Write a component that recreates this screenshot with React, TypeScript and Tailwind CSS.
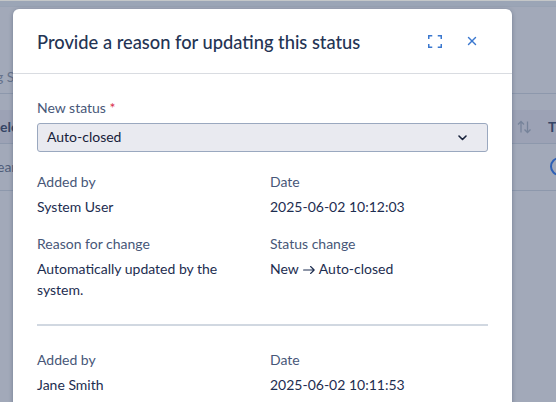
import { X } from 'lucide-react';

const history = [
  {
    author: 'System User',
    date: '2025-06-02 10:12:03',
    reason: 'Automatically updated by the system.',
    change: ['New', 'Auto-closed'],
  },
  {
    author: 'Jane Smith',
    date: '2025-06-02 10:11:53',
    reason: '',
    change: [],
  },
];

function Field({ label, children }: { label: string; children: React.ReactNode }) {
  return (
    <div>
      <dt className="text-[#475778]">{label}</dt>
      <dd className="mt-1 text-[#1d2d50]">{children}</dd>
    </div>
  );
}

function Arrow() {
  return (
    <svg
      className="mr-[3.5px] ml-[4.5px] inline-block align-[-1px]"
      width="12"
      height="10"
      viewBox="0 0 12 10"
      fill="none"
      stroke="currentColor"
      strokeWidth="1.1"
      strokeLinecap="round"
      strokeLinejoin="round"
    >
      <path d="M0.6 5h10.6M7.6 1.5L11.2 5L7.6 8.5" />
    </svg>
  );
}

// Table page behind the dialog, already dimmed
function TablePage() {
  return (
    <div className="flex h-full flex-col overflow-hidden bg-[#a2a9b9]">
      <div className="h-px shrink-0 bg-[#c4c7c8]" />
      <div className="h-1.5 shrink-0 border-b border-[#98a2b3] bg-[#9ba5b6]" />
      <div className="flex h-[87px] shrink-0 items-end border-b border-[#8d98ac] pb-1.5">
        <span className="-ml-1 text-[#66738c]">g S</span>
      </div>
      <div className="h-4 shrink-0" />
      <div className="flex h-[34px] shrink-0 items-center border-b border-[#8d98ac] bg-[#9ca2b5] font-bold text-[#354566]">
        <span className="w-[517px] shrink-0">ele</span>
        <svg
          className="shrink-0 text-[#76839a]"
          width="15"
          height="14"
          viewBox="0 0 15 14"
          fill="none"
          stroke="currentColor"
          strokeWidth="1.3"
        >
          <path d="M4 12.5V1.5M1 4.5L4 1.5L7 4.5M10.5 1.5V12.5M7.5 9.5L10.5 12.5L13.5 9.5" />
        </svg>
        <span className="ml-4">T</span>
      </div>
      <div className="flex h-[47px] shrink-0 items-center border-b border-[#8d98ac] pb-px text-[#4f5d7a]">
        <span className="-ml-[3px] w-[553px] shrink-0">ear</span>
        <span className="h-[19px] w-8 shrink-0 rounded-full border-2 border-[#2e60b5]" />
      </div>
    </div>
  );
}

export default function App() {
  return (
    <div className="relative h-[402px] w-[556px] overflow-hidden font-['Lato',sans-serif] text-sm leading-[21px]">
      <TablePage />

      <div
        role="dialog"
        className="absolute top-[9px] left-[13px] h-[410px] w-[499px] rounded-md bg-white shadow-[0_1px_4px_rgba(40,55,85,0.4)]"
      >
        <header className="flex h-[65px] items-center border-b border-[#d9dce1] pr-[33px] pl-6">
          <h2 className="flex-1 pt-0.5 text-[18.3px] font-medium text-[#243454]">
            Provide a reason for updating this status
          </h2>
          <button aria-label="Expand" className="text-[#3b78cf]">
            <svg
              width="14"
              height="13"
              viewBox="0 0 14 13"
              fill="none"
              stroke="currentColor"
              strokeWidth="1.5"
            >
              <path d="M0.75 4V0.75H4.25M9.75 0.75H13.25V4M13.25 9V12.25H9.75M4.25 12.25H0.75V9" />
            </svg>
          </button>
          <button aria-label="Close" className="ml-[23px] text-[#3b78cf]">
            <X size={14} strokeWidth={2.4} />
          </button>
        </header>

        <div className="px-6 pt-[23px]">
          <label className="block text-[#475778]">
            New status <span className="text-[#d9304c]">*</span>
          </label>
          <div className="mt-[5px] flex h-[29px] items-center justify-between rounded-[3px] border border-[#9aa8bf] bg-[#e9eaf0] pr-5 pl-[9px] text-[#17213a]">
            <span className="pb-0.5">Auto-closed</span>
            <svg
              width="9"
              height="6"
              viewBox="0 0 9 6"
              fill="none"
              stroke="currentColor"
              strokeWidth="1.6"
              strokeLinecap="round"
              strokeLinejoin="round"
            >
              <path d="M1 1L4.5 4.5L8 1" />
            </svg>
          </div>

          <div className="mt-[19px]">
            {history.map((entry) => (
              <dl
                key={entry.date}
                className="mb-[23px] grid grid-cols-[193px_1fr] gap-x-10 gap-y-4 border-b-2 border-[#d1d8e1] pb-6"
              >
                <Field label="Added by">{entry.author}</Field>
                <Field label="Date">{entry.date}</Field>
                {entry.reason && <Field label="Reason for change">{entry.reason}</Field>}
                {entry.change.length > 0 && (
                  <Field label="Status change">
                    {entry.change[0]}
                    <Arrow />
                    {entry.change[1]}
                  </Field>
                )}
              </dl>
            ))}
          </div>
        </div>
      </div>
    </div>
  );
}
